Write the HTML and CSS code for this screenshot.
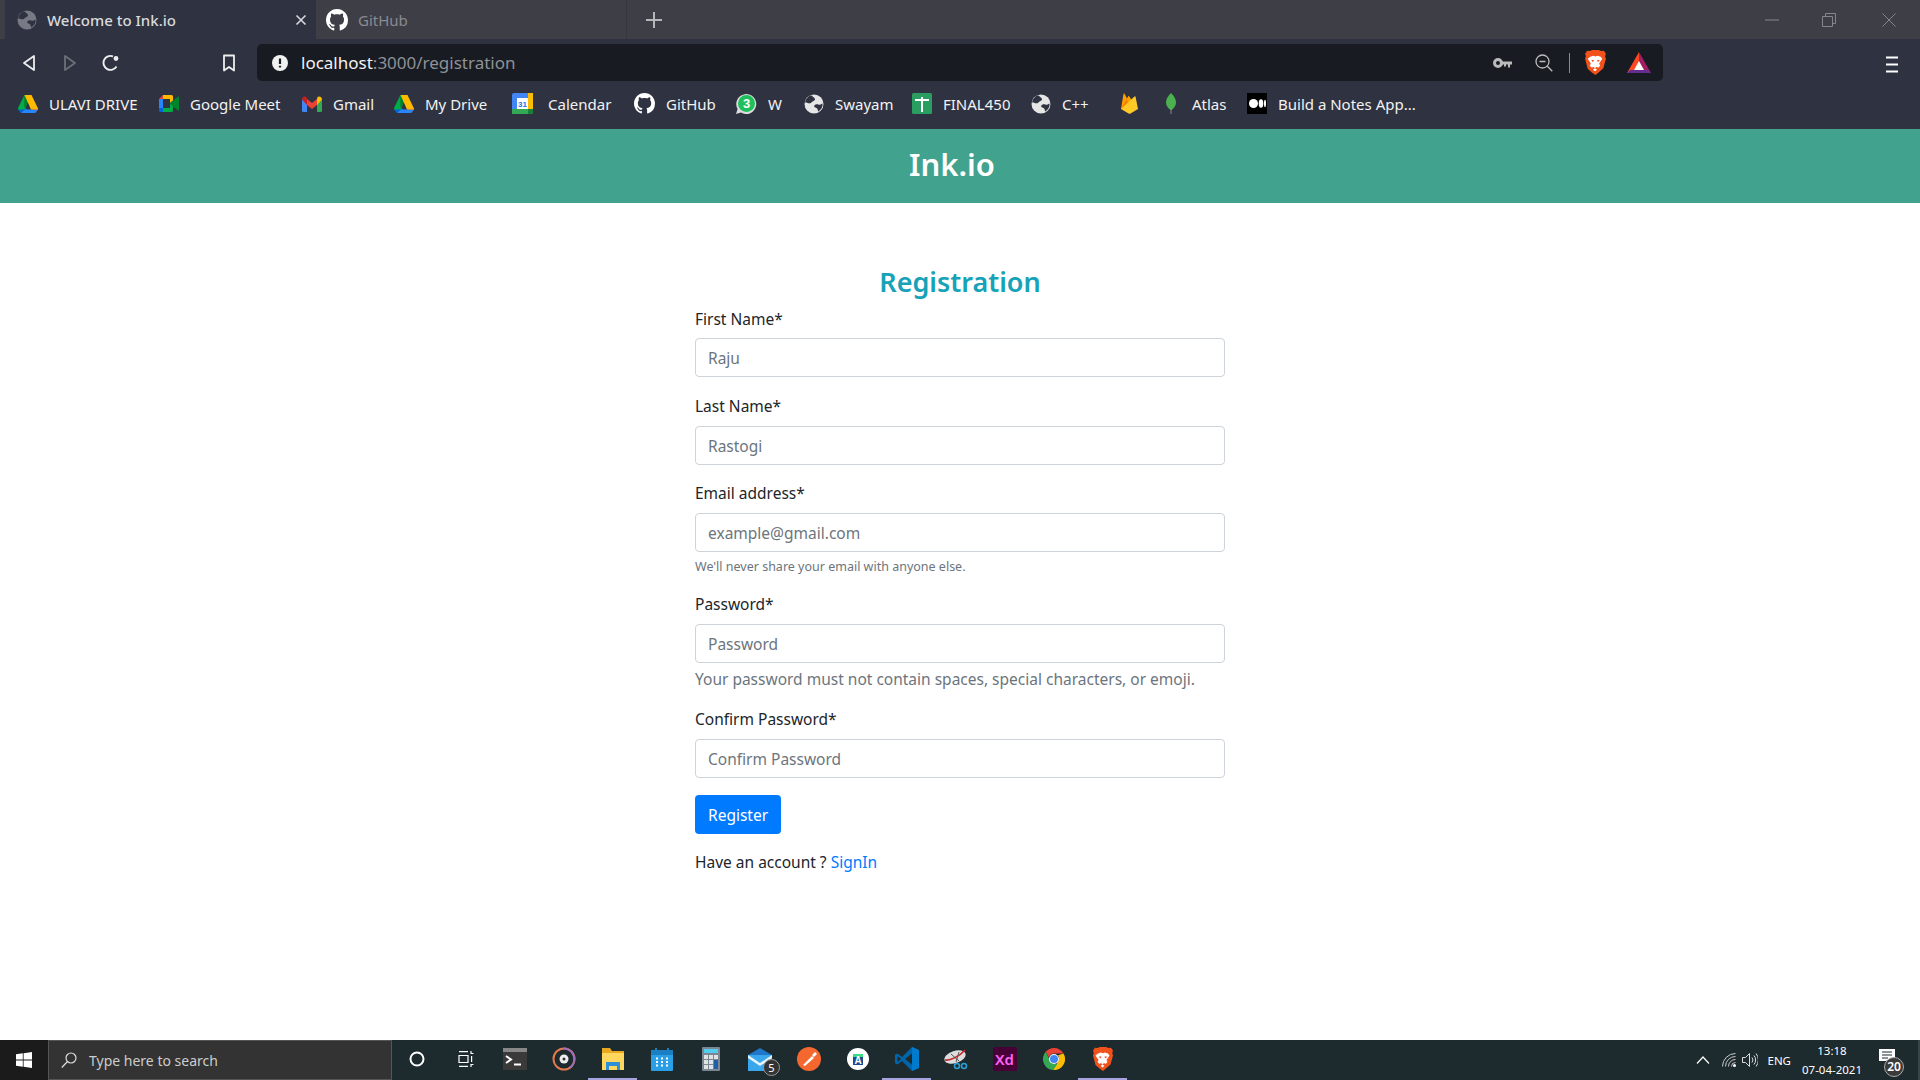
FILE: index.html
```html
<!DOCTYPE html>
<html lang="en">
<head>
    <meta charset="UTF-8">
    <title>Welcome to Ink.io</title>
    <link rel="stylesheet" href="styles.css">
</head>
<body>
    <svg class="defs" width="0" height="0">
        <symbol id="i-github" viewBox="0 0 16 16"><path fill="#fff" d="M8 0C3.58 0 0 3.58 0 8c0 3.54 2.29 6.53 5.47 7.59.4.07.55-.17.55-.38 0-.19-.01-.82-.01-1.49-2.01.37-2.53-.49-2.69-.94-.09-.23-.48-.94-.82-1.13-.28-.15-.68-.52-.01-.53.63-.01 1.08.58 1.23.82.72 1.21 1.87.87 2.33.66.07-.52.28-.87.51-1.07-1.78-.2-3.64-.89-3.64-3.95 0-.87.31-1.59.82-2.15-.08-.2-.36-1.02.08-2.12 0 0 .67-.21 2.2.82.64-.18 1.32-.27 2-.27.68 0 1.36.09 2 .27 1.53-1.04 2.2-.82 2.2-.82.44 1.1.16 1.92.08 2.12.51.56.82 1.27.82 2.15 0 3.07-1.87 3.75-3.65 3.95.29.25.54.73.54 1.48 0 1.07-.01 1.93-.01 2.2 0 .21.15.46.55.38A8.013 8.013 0 0016 8c0-4.42-3.58-8-8-8z"/></symbol>
        <symbol id="i-globe" viewBox="0 0 20 20"><circle cx="10" cy="10" r="9.500" fill="currentColor"/><path fill="#2f3241" d="M7 1.200C9 3 10.500 3.200 11 5c.3 1.400-1.400 1.800-2.400 2.400C7.400 8.200 6.800 9.600 5 9.300 3.400 9 2 8 1 8.600 1.500 5 4 2.200 7 1.200zM18.600 9.500c.3 3.500-1.600 6.500-4.400 8-.6-1-.2-2.200-1-3-.9-.9-2.600-.8-3-2-.3-1.200 1-2.200 2.400-2.300 1.400-.2 2 .8 3.300.5 1-.2 1.600-.9 2.700-1.200z"/></symbol>
        <symbol id="i-drive" viewBox="0 0 20 18"><path fill="#0066da" d="M0 14.500 3 18h4l3-3.500-3-1.500z"/><path fill="#00ac47" d="M6.500 0 0 13l.1 1.500H7L10 6 9 2z"/><path fill="#ea4335" d="M17 18c.6-.300 3-3.500 3-3.500l-1.500-2H13l3 5.500z"/><path fill="#00832d" d="M6.500 0h7L10 7 7 12.500H6z"/><path fill="#2684fc" d="M3 18h14l3-3.500H7z"/><path fill="#ffba00" d="M6.500 0h7L20 13.500V14.500H13L6.500 0z"/></symbol>
        <symbol id="i-brave" viewBox="0 0 20 24"><path fill="#f1511b" d="M4.500 1 7 0h6l2.500 1L18 .8 20 3.500l-.8 2.500.8 2.500-2.500 9-4 3.500L10 24l-3.500-2.500-4-3.500L0 8.500.8 6 0 3.500 2 .8z"/><path fill="#fff" d="M5 6.500 8 5.500l2 .8 2-.8 3 1 1.500 2-3 4.500 1 2-2 2-1.500-1-1.500 1.500 2 1.500-2 1.500-2-1.500 2-1.500-1.500-1.500-1.500 1-2-2 1-2-3-4.500z"/><path fill="#f1511b" d="M6 9.500h2.500l-.5 1.500-1 .2zM14 9.500h-2.500l.5 1.500 1 .2z"/></symbol>
    </svg>

    <!-- browser chrome -->
    <div class="tabstrip">
        <div class="tab tab-active">
            <svg class="tab-icon globe-dim" width="20" height="20"><use href="#i-globe"/></svg>
            <span class="tab-title">Welcome to Ink.io</span>
            <svg class="tab-close" width="12" height="12" viewBox="0 0 12 12"><path d="M1.500 1.500l9 9M10.500 1.500l-9 9" stroke="#d8d9dc" stroke-width="1.600"/></svg>
        </div>
        <div class="tab tab-other">
            <svg class="tab-icon" width="22" height="22"><use href="#i-github"/></svg>
            <span class="tab-title">GitHub</span>
        </div>
        <div class="tab-new">
            <svg width="16" height="16" viewBox="0 0 16 16"><path d="M8 0v16M0 8h16" stroke="#b5b5ba" stroke-width="2"/></svg>
        </div>
        <div class="window-btns">
            <svg width="14" height="14" viewBox="0 0 14 14"><path d="M0 7h14" stroke="#85858b"/></svg>
            <svg class="win-restore" width="14" height="14" viewBox="0 0 14 14" fill="none" stroke="#85858b"><path d="M.5 3.500h10v10H.5zM3.500 3.500V.5h10v10h-3"/></svg>
            <svg width="14" height="14" viewBox="0 0 14 14"><path d="M.5.5l13 13M13.500.5l-13 13" stroke="#85858b"/></svg>
        </div>
    </div>

    <div class="toolbar">
        <div class="tool-btn">
            <svg width="14" height="18" viewBox="0 0 14 18" fill="none" stroke="#eee" stroke-width="1.800" stroke-linejoin="round"><path d="M12 2v14L2 9z"/></svg>
        </div>
        <div class="tool-btn">
            <svg width="14" height="18" viewBox="0 0 14 18" fill="none" stroke="#6d6f78" stroke-width="1.800" stroke-linejoin="round"><path d="M2 2v14l10-7z"/></svg>
        </div>
        <div class="tool-btn">
            <svg width="18" height="18" viewBox="0 0 18 18" fill="none" stroke="#eee" stroke-width="1.900"><path d="M14.500 12.500A7 7 0 1 1 11 2.300"/><circle cx="14" cy="4.500" r="2.400" fill="#eee" stroke="none"/></svg>
        </div>
        <div class="tool-btn tool-bookmark">
            <svg width="14" height="18" viewBox="0 0 14 18" fill="none" stroke="#eee" stroke-width="1.800" stroke-linejoin="round"><path d="M2 1.500h10v15L7 13l-5 3.500z"/></svg>
        </div>
        <div class="urlbar">
            <svg class="url-info" width="16" height="16" viewBox="0 0 16 16"><circle cx="8" cy="8" r="8" fill="#f1f1f1"/><path d="M8 3.500v5.500M8 10.800v1.700" stroke="#181b22" stroke-width="2.200"/></svg>
            <span class="url-text"><span class="url-host">localhost</span>:3000/registration</span>
            <div class="url-actions">
                <svg width="19" height="12" viewBox="0 0 19 12"><circle cx="5" cy="6" r="3.500" fill="none" stroke="#bbb" stroke-width="3"/><path d="M8 4.500h11v3h-2v3h-2v-3h-2v2h-2v-2H8z" fill="#bbb"/></svg>
                <svg class="url-zoom" width="18" height="18" viewBox="0 0 18 18" fill="none" stroke="#bbb" stroke-width="1.300"><circle cx="7.500" cy="7.500" r="6.500"/><path d="M12.300 12.300l5 5M4.500 7.500h6"/></svg>
                <span class="url-sep"></span>
                <svg class="url-brave" width="21" height="25"><use href="#i-brave"/></svg>
                <svg class="url-bat" width="24" height="21" viewBox="0 0 24 21"><path fill="#ff4724" d="M12 0 0 21h6l6-11z"/><path fill="#9e1f63" d="M12 0l12 21h-6l-6-11z"/><path fill="#662d91" d="M0 21h24l-3-3H3z"/><path fill="#fff" d="M12 9l5 9H7z"/></svg>
            </div>
        </div>
        <svg class="menu-btn" width="12" height="17" viewBox="0 0 12 17"><path d="M0 1.500h12M0 8.500h12M0 15.500h12" stroke="#fff" stroke-width="2"/></svg>
    </div>

    <div class="bookmarks">
        <div class="bm">
            <svg width="20" height="18"><use href="#i-drive"/></svg>
            <span>ULAVI DRIVE</span>
        </div>
        <div class="bm">
            <svg width="20" height="17" viewBox="0 0 20 17"><path fill="#ea4335" d="M4 0v4H0z"/><path fill="#2684fc" d="M0 4h4v9H0z"/><path fill="#0066da" d="M0 13h4v4H1.500A1.500 1.500 0 0 1 0 15.500z"/><path fill="#ffba00" d="M4 0h8.500A1.500 1.500 0 0 1 14 1.500V5.500L11 8V4H4z"/><path fill="#00ac47" d="M4 13h7V8l3 3v4.500a1.500 1.500 0 0 1-1.500 1.500H4z"/><path fill="#00832d" d="M11 8l3-2.500L20 1v15l-6-4.500z"/></svg>
            <span>Google Meet</span>
        </div>
        <div class="bm">
            <svg width="20" height="16" viewBox="0 0 20 16"><path fill="#4285f4" d="M0 3v11.500A1.500 1.500 0 0 0 1.500 16H5V7z"/><path fill="#34a853" d="M15 7v9h3.500a1.500 1.500 0 0 0 1.500-1.500V3z"/><path fill="#ea4335" d="M5 9V3l5 4 5-4v6l-5 4z"/><path fill="#c5221f" d="M0 3.500C0 1 2.700-.3 4.500 1L5 3.200V9z"/><path fill="#fbbc04" d="M20 3.500C20 1 17.300-.3 15.500 1L15 3.200V9z"/></svg>
            <span>Gmail</span>
        </div>
        <div class="bm">
            <svg width="20" height="18"><use href="#i-drive"/></svg>
            <span>My Drive</span>
        </div>
        <div class="bm bm-wide">
            <svg width="21" height="21" viewBox="0 0 21 21"><rect width="21" height="21" rx="2" fill="#4285f4"/><rect x="16" width="5" height="16" fill="#fbbc04"/><rect y="16" width="16" height="5" fill="#34a853"/><rect x="16" y="16" width="5" height="5" fill="#188038"/><rect x="5" y="5" width="11" height="11" fill="#fff"/><text x="10.500" y="14" class="cal-num">31</text></svg>
            <span>Calendar</span>
        </div>
        <div class="bm">
            <svg width="21" height="21"><use href="#i-github"/></svg>
            <span>GitHub</span>
        </div>
        <div class="bm">
            <svg width="21" height="21" viewBox="0 0 21 21"><path fill="#ddd" d="M0 21l1.600-5A10 10 0 1 1 5 19.500z"/><circle cx="10.500" cy="10.500" r="8.500" fill="#1fbf5c"/><text x="10.500" y="15" class="wa-num">3</text></svg>
            <span>W</span>
        </div>
        <div class="bm">
            <svg class="globe-light" width="20" height="20"><use href="#i-globe"/></svg>
            <span>Swayam</span>
        </div>
        <div class="bm">
            <svg width="20" height="21" viewBox="0 0 20 21"><rect width="20" height="21" rx="1.500" fill="#2a9d61"/><path d="M3 7h14M10 4v15" stroke="#fff" stroke-width="2"/></svg>
            <span>FINAL450</span>
        </div>
        <div class="bm">
            <svg class="globe-light" width="20" height="20"><use href="#i-globe"/></svg>
            <span>C++</span>
        </div>
        <div class="bm">
            <svg width="17" height="21" viewBox="0 0 17 21"><path fill="#ffa000" d="M0 16 2.500 1c.1-.5.700-.6 1-.2L6 5.500 7.200 3.200c.2-.4.700-.4.900 0L17 16z"/><path fill="#f57c00" d="M7.500 11 5.500 6 0 16z"/><path fill="#ffca28" d="M0 16 13.500 3.500c.4-.3 1-.1 1.100.4L17 16l-7.500 4.500c-.6.300-1.300.300-1.900 0z"/></svg>
        </div>
        <div class="bm">
            <svg width="10" height="21" viewBox="0 0 10 21"><path fill="#4caf50" d="M5 0c3 3 5 6 5 9.500 0 3.500-2.500 6-4.500 7.500h-1C2.500 15.500 0 13 0 9.500 0 6 2 3 5 0z"/><path fill="#8d8d80" d="M4.500 16h1v5h-1z"/></svg>
            <span class="bm-atlas">Atlas</span>
        </div>
        <div class="bm">
            <svg width="20" height="21" viewBox="0 0 20 21"><rect width="20" height="21" fill="#000"/><circle cx="6.500" cy="10.500" r="4.500" fill="#fff"/><ellipse cx="14" cy="10.500" rx="2.300" ry="4.200" fill="#fff"/><ellipse cx="18" cy="10.500" rx="1" ry="3.700" fill="#fff"/></svg>
            <span>Build a Notes App...</span>
        </div>
    </div>

    <!-- page -->
    <header class="app-header">Ink.io</header>

    <main class="page">
        <form class="reg-form">
            <h2 class="reg-title">Registration</h2>
            <div class="form-group">
                <label for="first">First Name*</label>
                <input type="text" id="first" placeholder="Raju">
            </div>
            <div class="form-group">
                <label for="last">Last Name*</label>
                <input type="text" id="last" placeholder="Rastogi">
            </div>
            <div class="form-group">
                <label for="email">Email address*</label>
                <input type="text" id="email" placeholder="example@gmail.com">
                <small class="hint-small">We'll never share your email with anyone else.</small>
            </div>
            <div class="form-group">
                <label for="pass">Password*</label>
                <input type="text" id="pass" placeholder="Password">
                <div class="hint">Your password must not contain spaces, special characters, or emoji.</div>
            </div>
            <div class="form-group">
                <label for="confirm">Confirm Password*</label>
                <input type="text" id="confirm" placeholder="Confirm Password">
            </div>
            <button type="button" class="btn-primary">Register</button>
            <p class="signin">Have an account ? <a href="#">SignIn</a></p>
        </form>
    </main>

    <!-- windows taskbar -->
    <footer class="taskbar">
        <div class="start">
            <svg width="16" height="16" viewBox="0 0 16 16"><path fill="#fff" d="M0 2.300 6.800 1.300V7.600H0zM7.600 1.200 16 0V7.600H7.600zM0 8.400H6.800V14.700L0 13.700zM7.600 8.400H16V16L7.600 14.800z"/></svg>
        </div>
        <div class="search">
            <svg width="16" height="16" viewBox="0 0 16 16" fill="none" stroke="#ddd" stroke-width="1.200"><circle cx="10" cy="6" r="5"/><path d="M6.500 9.500.8 15.500"/></svg>
            <span>Type here to search</span>
        </div>
        <div class="task-icons">
            <div class="task">
                <svg width="16" height="16" viewBox="0 0 16 16"><circle cx="8" cy="8" r="6.500" fill="none" stroke="#fff" stroke-width="2"/></svg>
            </div>
            <div class="task">
                <svg width="16" height="16" viewBox="0 0 16 16" fill="none" stroke="#fff" stroke-width="1.200"><path d="M1 .6h9M1 15.400h9M1 4.500h9v7H1zM13 0v2.500h2.500M13.600 5v6M13 16v-2.500h2.500"/></svg>
            </div>
            <div class="task">
                <svg width="24" height="22" viewBox="0 0 24 22"><rect width="24" height="22" fill="#3a3a3a"/><rect width="24" height="4" fill="#888"/><path d="M3 8l5 3.500-5 3.500" fill="none" stroke="#fff" stroke-width="2"/><path d="M11 16.500h7" stroke="#fff" stroke-width="2"/></svg>
            </div>
            <div class="task">
                <svg width="24" height="24" viewBox="0 0 24 24" fill="none"><circle cx="12" cy="12" r="10.500" stroke="#e07a4f" stroke-width="2"/><path d="M12 1.500a10.500 10.500 0 0 1 6 19" stroke="#9d6bc0" stroke-width="2"/><circle cx="12" cy="12" r="4.500" fill="#eee"/><circle cx="12" cy="12" r="1.500" fill="#333"/></svg>
            </div>
            <div class="task task-open">
                <svg width="22" height="22" viewBox="0 0 22 22"><path fill="#e8a820" d="M0 0h8l2 3h12v19H0z"/><path fill="#ffd75e" d="M0 5h22v17H0z"/><path fill="#2d8fd5" d="M4 14h14v8h-3v-4H7v4H4z"/></svg>
            </div>
            <div class="task">
                <svg width="22" height="23" viewBox="0 0 22 23"><rect y="2" width="22" height="21" rx="1" fill="#2b9fe6"/><rect y="2" width="22" height="5" fill="#1b7fc4"/><rect x="4" width="2" height="5" fill="#1b7fc4"/><rect x="16" width="2" height="5" fill="#1b7fc4"/><path d="M5 10.500h2M10 10.500h2M15 10.500h2M5 14h2M10 14h2M15 14h2M5 17.500h2M10 17.500h2M15 17.500h2" stroke="#fff" stroke-width="2"/></svg>
            </div>
            <div class="task">
                <svg width="18" height="24" viewBox="0 0 18 24"><rect width="18" height="24" rx="1" fill="#7b8690"/><rect x="2" y="2" width="14" height="4" fill="#52cdf0"/><path d="M2 8h4v4H2zM7 8h4v4H7zM2 13h4v4H2zM7 13h4v4H7zM2 18h4v4H2zM7 18h4v4H7z" fill="#dfe3e6"/><path d="M12 8h4v4h-4z" fill="#dfe3e6"/><path d="M12 13h4v9h-4z" fill="#1f5fa8"/></svg>
            </div>
            <div class="task">
                <svg class="mail-icon" width="24" height="23" viewBox="0 0 24 23"><path fill="#1f77c9" d="M0 7 12 0l12 7v2H0z"/><rect y="7" width="24" height="16" fill="#3aa7ec"/><path fill="#e8f5fd" d="M0 7l12 8 12-8v3L12 18 0 10z"/></svg>
                <span class="task-badge">5</span>
            </div>
            <div class="task">
                <svg width="24" height="24" viewBox="0 0 24 24"><circle cx="12" cy="12" r="12" fill="#f4682f"/><path d="M6 18 15 9l2 2-9 8zM15 8l3-3 2 2-3 3z" fill="#fff"/></svg>
            </div>
            <div class="task">
                <svg width="22" height="22" viewBox="0 0 22 22"><circle cx="11" cy="11" r="11" fill="#fff"/><path d="M6 6h10v11H6z" fill="#1a4d8f"/><path d="M6 6h10v3H6z" fill="#3ddc84"/><text x="11" y="16" class="as-mark">A</text></svg>
            </div>
            <div class="task task-open">
                <svg width="24" height="24" viewBox="0 0 24 24"><path fill="#0065a9" d="M17 0 7 10 2.500 6.500 0 7.800v8.400L2.500 17.500 7 14l10 10 7-3V3zM17 6.500v11L10 12zM2.500 9l3.500 3-3.500 3z"/><path fill="#007acc" d="M17 0l7 3v18l-7 3z"/></svg>
            </div>
            <div class="task">
                <svg width="24" height="22" viewBox="0 0 24 22" fill="none"><ellipse cx="11" cy="9" rx="11" ry="6" fill="#ddd" transform="rotate(-18 11 9)"/><path d="M1 12C6 13 16 8 21 2" stroke="#c62828" stroke-width="1.600"/><path d="M7 6l8 7M15 4l-3 10" stroke="#555"/><circle cx="13" cy="18" r="2.500" stroke="#2a9fd6" stroke-width="1.600"/><circle cx="20" cy="18" r="2.500" stroke="#2a9fd6" stroke-width="1.600"/></svg>
            </div>
            <div class="task">
                <div class="xd-icon">Xd</div>
            </div>
            <div class="task">
                <svg width="22" height="22" viewBox="0 0 22 22"><path fill="#ea4335" d="M11 0a11 11 0 0 1 9.500 5.500H11a5.500 5.500 0 0 0-5.200 3.700L2.700 3.800A11 11 0 0 1 11 0z"/><path fill="#fbbc04" d="M20.500 5.500A11 11 0 0 1 10 22l4.700-8A5.500 5.500 0 0 0 15 7.300z"/><path fill="#34a853" d="M2.700 3.800 7.500 13.500a5.500 5.500 0 0 0 7.200 2L10 22A11 11 0 0 1 2.700 3.800z"/><circle cx="11" cy="11" r="5" fill="#fff"/><circle cx="11" cy="11" r="4" fill="#4285f4"/></svg>
            </div>
            <div class="task task-open">
                <svg width="20" height="24"><use href="#i-brave"/></svg>
            </div>
        </div>
        <div class="tray">
            <svg width="14" height="8" viewBox="0 0 14 8" fill="none" stroke="#fff" stroke-width="1.200"><path d="M1 7.500 7 1l6 6.500"/></svg>
            <svg class="tray-wifi" width="14" height="14" viewBox="0 0 14 14" fill="none" stroke="#ccc"><path d="M.5 13.500A13 13 0 0 1 13.500.5M3.500 13.500A10 10 0 0 1 13.500 3.500M6.500 13.500A7 7 0 0 1 13.500 6.500M9.500 13.500a4 4 0 0 1 4-4"/><circle cx="12.500" cy="12.500" r="1.500" fill="#fff" stroke="none"/></svg>
            <svg class="tray-vol" width="16" height="14" viewBox="0 0 16 14" fill="none" stroke="#ddd"><path d="M.5 4.500h3l4-4v13l-4-4h-3zM10 4.500a4 4 0 0 1 0 5M12 2.500a7 7 0 0 1 0 9M14 .5a10 10 0 0 1 0 13"/></svg>
            <span class="tray-lang">ENG</span>
            <div class="clock">
                <div>13:18</div>
                <div>07-04-2021</div>
            </div>
            <div class="notify">
                <svg class="notify-icon" width="16" height="14" viewBox="0 0 16 14"><path fill="#fff" d="M0 0h16v12H0z"/><path d="M3 3h10M3 6h10M3 9h6" stroke="#1d2a2e"/></svg>
                <span class="notify-count">20</span>
            </div>
        </div>
    </footer>
</body>
</html>
```

FILE: styles.css
```css
* {
    box-sizing: border-box;
}

body {
    margin: 0;
    height: 1080px;
    overflow: hidden;
    display: flex;
    flex-direction: column;
    font-family: "Noto Sans", "Open Sans", sans-serif;
    background: #fff;
    color: #212529;
}

.defs {
    position: absolute;
}

svg {
    display: block;
    flex: none;
}

/* tabs */
.tabstrip {
    height: 39px;
    display: flex;
    padding-left: 5px;
    background: #3e3e47;
}

.tab {
    width: 311px;
    display: flex;
    align-items: center;
    font-size: 15px;
}

.tab-active {
    padding: 0 9px 0 12px;
    background: #2f3241;
    color: #d8d9dc;
    font-weight: 500;
}

.tab-title {
    margin-left: 10px;
}

.tab-close {
    margin-left: auto;
}

.tab-other {
    padding-left: 10px;
    border-right: 1px solid #36363e;
    color: #8a8a90;
}

.tab-icon {
    color: #6b6d78;
}

.globe-dim {
    color: #777984;
}

.tab-new {
    width: 53px;
    display: flex;
    align-items: center;
    justify-content: center;
}

.window-btns {
    margin-left: auto;
    display: flex;
    align-items: center;
    gap: 43px;
    padding-right: 24px;
}

.win-restore {
    margin-right: 3px;
}

/* address row */
.toolbar {
    height: 46px;
    display: flex;
    align-items: flex-start;
    padding: 5px 0 0 8px;
    background: #2f3241;
}

.tool-btn {
    width: 41px;
    height: 37px;
    display: flex;
    align-items: center;
    justify-content: center;
}

.tool-bookmark {
    margin-left: 77px;
}

.urlbar {
    width: 1406px;
    height: 37px;
    margin-left: 8px;
    display: flex;
    align-items: center;
    padding-left: 15px;
    border-radius: 5px;
    background: #181b22;
    color: #8f9196;
    font-size: 17px;
}

.url-text {
    margin-left: 13px;
}

.url-host {
    color: #f2f2f2;
}

.url-actions {
    margin-left: auto;
    display: flex;
    align-items: center;
    padding-right: 12px;
}

.url-zoom {
    margin-left: 23px;
}

.url-sep {
    width: 1px;
    height: 20px;
    margin-left: 16px;
    background: #8a8a8a;
}

.url-brave {
    margin-left: 15px;
}

.url-bat {
    margin-left: 21px;
}

.menu-btn {
    margin: 12px 0 0 223px;
}

/* bookmarks */
.bookmarks {
    height: 44px;
    display: grid;
    grid-template-columns: 141px 143px 92px 118px 122px 102px 68px 108px 119px 90px 45px 81px 1fr;
    align-items: center;
    padding: 0 0 7px 18px;
    background: #2f3241;
    color: #f2f2f2;
    font-size: 15px;
}

.bm {
    display: flex;
    align-items: center;
    gap: 11px;
    white-space: nowrap;
}

.bm-wide {
    gap: 15px;
}

.bm-atlas {
    margin-left: 5px;
}

.globe-light {
    color: #e6e6e6;
}

.cal-num {
    font: bold 8px "Liberation Sans", sans-serif;
    fill: #1a73e8;
    text-anchor: middle;
}

.wa-num {
    font: bold 13px "Liberation Sans", sans-serif;
    fill: #fff;
    text-anchor: middle;
}

/* page */
.app-header {
    height: 74px;
    padding-right: 16px;
    background: #41a28d;
    color: #fff;
    font-size: 31px;
    font-weight: 600;
    line-height: 71px;
    text-align: center;
}

.page {
    flex: 1;
    min-height: 0;
}

.reg-form {
    width: 530px;
    margin: 0 auto;
    padding-top: 57px;
}

.reg-title {
    margin: 0 0 3px;
    color: #17a2b8;
    font-size: 27px;
    font-weight: 600;
    line-height: 44px;
    text-align: center;
}

.form-group {
    margin-bottom: 16px;
}

.form-group:first-of-type label {
    margin-bottom: 7px;
}

.form-group:first-of-type {
    margin-bottom: 17px;
}

.form-group:last-of-type {
    margin-bottom: 17px;
}

label {
    display: block;
    margin-bottom: 8px;
    font-size: 15.5px;
    line-height: 24px;
}

input {
    display: block;
    width: 100%;
    height: 39px;
    padding: 6px 12px;
    border: 1px solid #ced4da;
    border-radius: 4px;
    font-family: inherit;
    font-size: 15.5px;
    color: #495057;
}

input::placeholder {
    color: #6c757d;
    opacity: 1;
}

.hint-small {
    display: block;
    margin-top: 5px;
    font-size: 12.5px;
    line-height: 19px;
    color: #6c757d;
}

.hint {
    margin-top: 4px;
    font-size: 15.5px;
    line-height: 24px;
    color: #6c757d;
}

.btn-primary {
    display: block;
    height: 39px;
    padding: 0 13px;
    border: none;
    border-radius: 4px;
    background: #007bff;
    color: #fff;
    font-family: inherit;
    font-size: 15.5px;
}

.signin {
    margin: 16px 0 0;
    font-size: 15.5px;
    line-height: 24px;
}

.signin a {
    color: #007bff;
    text-decoration: none;
}

/* taskbar */
.taskbar {
    height: 40px;
    display: flex;
    background: #1d2a2e;
    color: #fff;
}

.start {
    width: 48px;
    display: flex;
    align-items: center;
    justify-content: center;
    background: #1b1b1b;
}

.search {
    width: 344px;
    display: flex;
    align-items: center;
    gap: 12px;
    padding-left: 12px;
    border: 1px solid #555;
    background: #333;
    color: #ccc;
    font-size: 14px;
}

.task-icons {
    display: flex;
}

.task {
    position: relative;
    width: 49px;
    display: flex;
    align-items: center;
    justify-content: center;
    border-bottom: 2px solid transparent;
}

.task-open {
    border-bottom-color: #a6a3e0;
}

.task-badge {
    position: absolute;
    right: 4px;
    bottom: 2px;
    width: 17px;
    height: 17px;
    border: 1px solid #999;
    border-radius: 50%;
    background: #333;
    font-size: 11px;
    line-height: 15px;
    text-align: center;
}

.xd-icon {
    width: 24px;
    height: 24px;
    border-radius: 2px;
    background: #470137;
    color: #ff61f6;
    font-size: 15px;
    font-weight: 600;
    line-height: 24px;
    text-align: center;
}

.as-mark {
    font: bold 10px "Liberation Sans", sans-serif;
    fill: #fff;
    text-anchor: middle;
}

.tray {
    flex: 1;
    display: flex;
    align-items: center;
    justify-content: flex-end;
    font-size: 11.5px;
}

.tray-wifi {
    margin-left: 12px;
}

.tray-vol {
    margin-left: 6px;
}

.tray-lang {
    margin-left: 9px;
}

.clock {
    width: 76px;
    margin-left: 3px;
    line-height: 19px;
    text-align: center;
}

.notify {
    position: relative;
    width: 50px;
    height: 40px;
    display: flex;
    align-items: center;
    padding-left: 9px;
    border-right: 2px solid #3a4347;
}

.notify-icon {
    margin-top: -8px;
}

.notify-count {
    position: absolute;
    left: 14px;
    top: 17px;
    width: 20px;
    height: 20px;
    border: 1px solid #aaa;
    border-radius: 50%;
    background: #3a3a3a;
    font-size: 12px;
    font-weight: 600;
    line-height: 18px;
    text-align: center;
}
```
